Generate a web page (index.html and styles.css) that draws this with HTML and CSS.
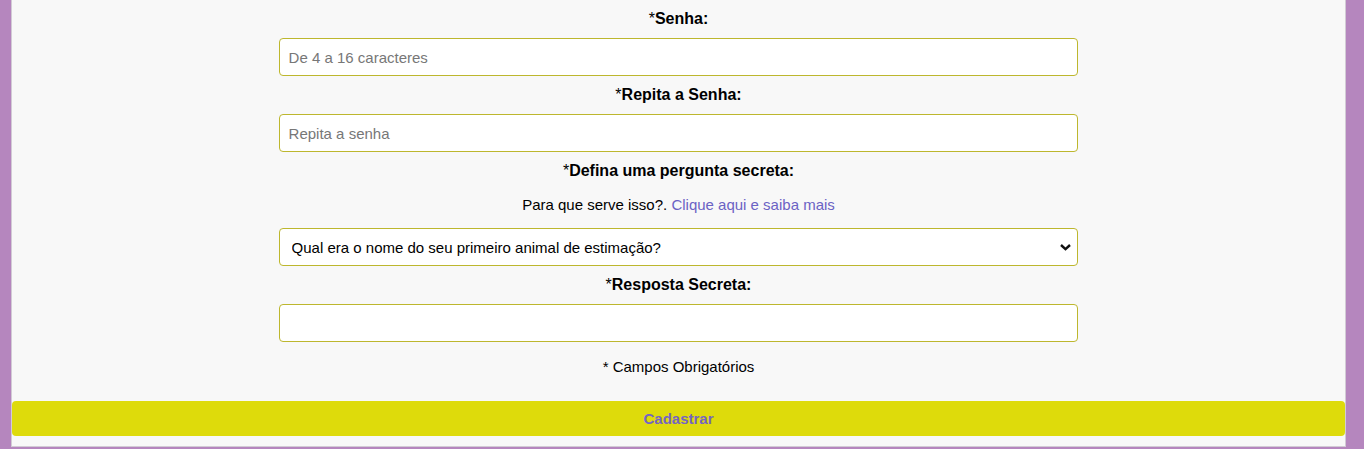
FILE: index.html
```html
<!DOCTYPE html>
<html lang="pt-BR">
<head>
<meta charset="utf-8">
<title>Cadastro</title>
<link rel="stylesheet" href="styles.css">
</head>
<body>
<div class="card">
  <form class="form">
    <label class="label" for="senha"><span class="req">*</span>Senha:</label>
    <input class="field" id="senha" type="password" placeholder="De 4 a 16 caracteres">

    <label class="label" for="senha2"><span class="req">*</span>Repita a Senha:</label>
    <input class="field" id="senha2" type="password" placeholder="Repita a senha">

    <label class="label" for="pergunta"><span class="req">*</span>Defina uma pergunta secreta:</label>
    <p class="help">Para que serve isso?. <a class="link" href="#">Clique aqui e saiba mais</a></p>
    <div class="select-wrap">
      <select class="field select" id="pergunta">
        <option>Qual era o nome do seu primeiro animal de estimação?</option>
      </select>
      <svg class="chevron" width="11" height="7" viewBox="0 0 11 7" aria-hidden="true"><polyline points="1,1 5.5,5.2 10,1" fill="none" stroke="#111" stroke-width="2.4"/></svg>
    </div>

    <label class="label" for="resposta"><span class="req">*</span>Resposta Secreta:</label>
    <input class="field" id="resposta" type="text">

    <p class="note">* Campos Obrigatórios</p>
  </form>
  <button class="submit" type="button">Cadastrar</button>
</div>
</body>
</html>
```

FILE: styles.css
```css
html, body {
  margin: 0;
  padding: 0;
}
body {
  background: #b586be;
  font-family: "Liberation Sans", Arial, sans-serif;
  color: #000;
  padding: 0 18px 2px 11px;
  height: 449px;
  box-sizing: border-box;
  overflow: hidden;
}
.card {
  background: #f8f8f8;
  border: 1px solid #d2cbd5;
  border-top: 0;
  padding: 0 0 10px;
  display: flex;
  flex-direction: column;
  align-items: center;
}
.form {
  width: 60%;
  display: flex;
  flex-direction: column;
  align-items: stretch;
}
.label {
  display: block;
  text-align: center;
  font-size: 16px;
  font-weight: bold;
  line-height: 22px;
  margin: 8px 0 8px;
}
.req {
  font-weight: normal;
}
.field {
  box-sizing: border-box;
  height: 38px;
  width: 100%;
  border: 1px solid #bdb72e;
  border-radius: 4px;
  background: #fff;
  font-family: "Liberation Sans", Arial, sans-serif;
  font-size: 15px;
  color: #000;
  padding: 0 9px;
  outline: none;
}
.field::placeholder {
  color: #777;
}
.help {
  margin: 4px 0 12px;
  font-size: 15px;
  line-height: 22px;
  text-align: center;
}
.link {
  color: #6b62c4;
  text-decoration: none;
}
.select-wrap {
  position: relative;
}
.select {
  appearance: none;
  -webkit-appearance: none;
  padding: 0 30px 0 12px;
}
.chevron {
  position: absolute;
  right: 7px;
  top: 16px;
  pointer-events: none;
}
.note {
  margin: 14px 0 23px;
  font-size: 15px;
  line-height: 22px;
  text-align: center;
}
.submit {
  width: 100%;
  height: 35px;
  border: 0;
  border-radius: 4px;
  background: #dedb0b;
  color: #7565c2;
  font-family: "Liberation Sans", Arial, sans-serif;
  font-size: 15px;
  font-weight: bold;
  cursor: pointer;
}
```
